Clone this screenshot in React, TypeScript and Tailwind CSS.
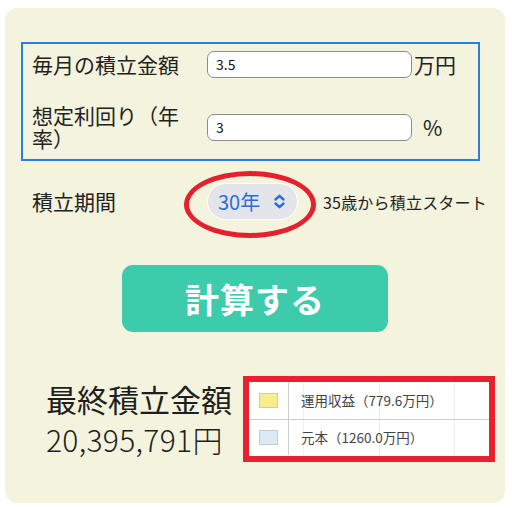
import React from "react";

const JP = { fontFamily: '"Noto Sans CJK JP", "Noto Sans", sans-serif' };

function UpDown() {
  return (
    <svg width="13" height="15" viewBox="0 0 13 15" fill="none" stroke="#2b6fd8" strokeWidth="2.4" strokeLinecap="round" strokeLinejoin="round">
      <path d="M2.5 5.5 L6.5 1.8 L10.5 5.5" />
      <path d="M2.5 9.5 L6.5 13.2 L10.5 9.5" />
    </svg>
  );
}

function Field({ label, value, unit, unitGap }: { label: string; value: string; unit: string; unitGap: string }) {
  return (
    <div className="flex items-center">
      <div className="w-[160px] text-[21px] leading-[23px] text-[#222]">{label}</div>
      <div className="ml-[15px] flex h-[27px] w-[205px] items-center rounded-[7px] border border-[#8c8c8c] bg-white pl-[8px] text-[14px] text-[#111]">
        {value}
      </div>
      <div className={`${unitGap} text-[21px] leading-[23px] text-[#222]`}>{unit}</div>
    </div>
  );
}

export default function App() {
  return (
    <div className="h-[509px] w-[512px] bg-white pt-[8px] pl-[5px]" style={JP}>
      <div className="flex h-[495px] w-[500px] flex-col rounded-[12px] bg-[#f4f3de] pt-[34px] pl-[16px]">
        {/* inputs */}
        <div className="w-[459px] border-2 border-[#2a7de1] pt-[7px] pb-[9px] pl-[9px]">
          <Field label="毎月の積立金額" value="3.5" unit="万円" unitGap="ml-[2px]" />
          <div className="mt-[26px]">
            <Field label="想定利回り（年率）" value="3" unit="%" unitGap="ml-[11px]" />
          </div>
        </div>

        {/* period */}
        <div className="mt-[22px] flex h-[37px] items-center pl-[11px]">
          <div className="w-[175px] text-[21px] leading-[23px] text-[#222]">積立期間</div>
          <div className="relative">
            <div className="flex h-[37px] w-[91px] items-center rounded-full border border-white bg-[#e4e5ea] pl-[10px]">
              <span className="text-[20px] leading-none text-[#2b6fd8]">30年</span>
              <span className="ml-[13px] flex">
                <UpDown />
              </span>
            </div>
            <div className="pointer-events-none absolute left-[-23px] top-[-12px] h-[67px] w-[132px] rounded-[50%] border-[5px] border-[#e51f2c]" />
          </div>
          <div className="ml-[25px] text-[16px] tracking-[0.2px] text-[#222]">35歳から積立スタート</div>
        </div>

        {/* button */}
        <div className="mt-[45px] flex w-[468px] justify-center">
          <div className="flex h-[67px] w-[266px] items-center justify-center rounded-[11px] bg-[#3ccbab] text-[34px] font-bold tracking-[1px] text-white">
            計算する
          </div>
        </div>

        {/* result */}
        <div className="mt-[44px] flex items-center">
          <div className="ml-[25px] w-[197px] text-[#1e1e1e]">
            <div className="text-[31px] leading-[38px]">最終積立金額</div>
            <div className="mt-[2px] text-[30px] leading-[38px] font-light tracking-[0.3px]">20,395,791円</div>
          </div>
          <div className="h-[86px] w-[252px] border-[6px] border-[#e8202f] bg-white">
            <div className="relative h-full w-full text-[13.5px] text-[#444]">
              <div className="absolute inset-y-0 left-[130px] w-px bg-[#ececec]" />
              <div className="absolute inset-y-0 left-[205px] w-px bg-[#ececec]" />
              <div className="absolute inset-y-0 left-[54px] w-px bg-[#f0f0f0]" />
              <div className="relative flex h-[38px] items-center border-b border-[#cfcfcf]">
                <div className="flex h-full w-[40px] items-center justify-center border-r border-[#cfcfcf]">
                  <div className="h-[15px] w-[19px] border border-[#c9c9c9] bg-[#fbee8a]" />
                </div>
                <div className="ml-[12px]">運用収益（779.6万円）</div>
              </div>
              <div className="relative flex h-[35px] items-center">
                <div className="flex h-full w-[40px] items-center justify-center border-r border-[#cfcfcf]">
                  <div className="h-[15px] w-[19px] border border-[#c9c9c9] bg-[#dbeaf5]" />
                </div>
                <div className="ml-[12px]">元本（1260.0万円）</div>
              </div>
            </div>
          </div>
        </div>
      </div>
    </div>
  );
}
